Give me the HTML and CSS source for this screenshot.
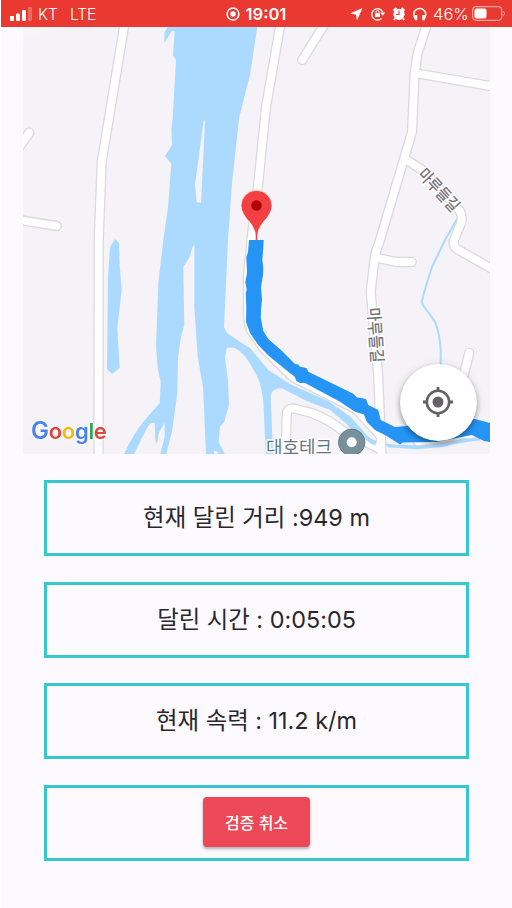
FILE: index.html
```html
<!DOCTYPE html>
<html lang="ko">
<head>
<meta charset="utf-8">
<title>달리기</title>
<link rel="stylesheet" href="styles.css">
</head>
<body>
<header class="status">
  <div class="carrier">
    <svg width="24" height="16" viewBox="0 0 24 16" fill="#fff"><rect x="1" y="10" width="4" height="5" rx="1"/><rect x="7" y="7.500" width="4" height="7.500" rx="1"/><rect x="13" y="4" width="4" height="11" rx="1"/><rect x="19" y="1" width="4" height="14" rx="1" opacity=".25"/></svg>
    <span class="kt">KT</span><span>LTE</span>
  </div>
  <div class="clock">
    <svg width="14" height="14" viewBox="0 0 14 14"><circle cx="7" cy="7" r="5.900" fill="none" stroke="#fff" stroke-width="1.500"/><circle cx="7" cy="7" r="2.700" fill="#fff"/></svg>
    <span>19:01</span>
  </div>
  <div class="indicators">
    <svg width="157" height="20" viewBox="349 4 157 20" fill="none" stroke="#fff">
      <path d="M350 13.500 362.500 8 357 20.500 355.800 14.500Z" fill="#fff" stroke="none"/>
      <path d="M382.700 12a5.700 5.700 0 1 0-1.200 6.500" stroke-width="1.300"/><path d="M380.200 12.500h5l-2.500 3.300Z" fill="#fff" stroke="none"/><path d="M376 13.500V12a1.500 1.500 0 0 1 3 0v1.500" stroke-width="1"/><rect x="375" y="13.200" width="5" height="3.800" rx=".5" fill="#fff" stroke="none"/>
      <circle cx="399" cy="14.300" r="5.600" fill="#fff" stroke="none"/><path d="m393.500 10.700 3-2.700M401.500 8l3 2.700M395 18.500l-1.200 1.500M403 18.500l1.200 1.500" stroke-width="2"/><path d="M399 10.500v4h-3" stroke="#ea3931" stroke-width="1.100"/>
      <path d="M415.300 18.500a6 6 0 1 1 8.900 0" stroke-width="1.500"/><path d="M416 15v5.300M423.500 15v5.300" stroke-width="2.500"/>
      <rect x="472.700" y="6.700" width="29" height="13.600" rx="3.500" stroke-width="1.200" opacity=".55"/><rect x="474.500" y="8.500" width="12" height="10" rx="2" fill="#fff" stroke="none"/><path d="M503.500 11.500q2 2 0 4" stroke-width="1" opacity=".6"/>
    </svg>
    <span class="battery">46%</span>
  </div>
</header>
<main>
  <section class="map">
    <svg class="terrain" width="467" height="427" viewBox="23 27 467 427">
      <defs>
        <g id="roads">
          <path d="M124.300 25 101.700 162 98.700 240 98.500 456"/>
          <path d="M29.300 132.700 18 149M56.700 226 18 219.800"/>
          <path d="M280.300 25 266 107 258.300 183 252 235 248 275V315Q248.500 325 251.500 331L263.500 348 292.500 377 356 409 380 435"/>
          <path d="M324 25 302.300 60"/>
          <path d="M426.700 25 417.700 53 414.700 73 412 132 380 240 375 255 370.700 292 378 373 381.700 456"/>
          <path d="M414.700 73 492 86.300M406.700 160 424 171 460 211Q463 218 461 223L454 240Q453 246 457 249L492 269"/>
          <path d="M375 257.500 396.700 262H411.700M469.300 352.700 460 390"/>
          <path d="M285.500 456 286.700 415Q287 407.500 294 408.500L311.700 413Q330 420 343 431L378 448"/>
          <path d="M418 441 436 439 478 433"/>
        </g>
      </defs>
      <rect x="23" y="27" width="467" height="427" fill="#f5f3f7"/>
      <path d="M23 27H60L23 38Z" fill="#f6f5f5"/>
      <g fill="#acdaff">
        <path d="M167.700 27 164.300 33V43L171.700 31 174.700 31 173 55 176 60 172.700 118 171.300 130 172 145 165 156 171.300 164 168 207 163.300 240 158.300 283 156 347 157.700 368 160.700 382 159.700 403 143.300 421.700Q132 436 124 454H134L145 431.700Q149 424 151 423H154.700L155.300 440 157 444 158.700 433 164.700 422.700V437L160.300 454H166.300L172.300 430 177.300 393 178 357 181 337 184.300 325 183.300 267 190 256.700 192 248 194.300 244.700V307L197.700 357 203 387 206 454H214V451H217L218 454H224.700L218.700 441.700 220 426.700 224.300 421.700 229 405 228 380 225 358 226.700 347.700H234Q247 353 260 383L263.300 400 265.700 454H273L270.700 397Q271 388 281.700 388.300L306.700 401 330 410 346.700 424 360 440 390 446.700 416.700 448.300 443.300 446 480 440V438.500L463 438 430 445 396.700 444.700 370 441.700 350 418.300 330 402 290 384 268.300 370 250 348 240 341.700 226.700 332.700 224 327 228 240 232 183 239.300 117 250 75 257.300 27Z"/>
        <path d="M115 239 119 243 119.700 265 121.700 290 117.300 328 119.700 368 112 373.700 107 369 108 277 110 247Z"/>
      </g>
      <path d="m203.700 120 1.300 1-4 82-4.300-1-1.700-17 3-22Z" fill="#f5f3f7"/>
      <path d="M457 219 445 240 432 267Q425 288 421.700 301.700L423 305 435 321.700Q440 335 440.700 350V374" fill="none" stroke="#acdaff" stroke-width="2"/>
      <g fill="none" stroke-linecap="round" stroke-linejoin="round"><use href="#roads" stroke="#dad9df" stroke-width="10.400"/><use href="#roads" stroke="#fff" stroke-width="7.800"/></g>
      <path d="M336 409 349 418.500 362 433Q368 441 376 443" fill="none" stroke="#acdaff" stroke-width="4.500"/>
      <path d="M388 446.300 416.700 448.300 443.300 446 463 439.500 480 439.500" fill="none" stroke="#acdaff" stroke-width="2"/>
      <path d="M249 240H263.700L263 252 262.300 260 263.300 268 263 275 261 287 262 300 261 310 260.800 318 263.300 331 268.300 339 282 351 295 364 298.300 364.500 299.500 366.500 306.700 368.300 308.300 371.700 353.300 393.700 356.700 397.300 366 399 368.300 405 378.300 410 380.700 420 395 427 440 423 475 419 490 423V442L484 441 471.700 435 436.700 442 403 442.500 400 444.500 386.700 436 375 430 366.700 421.700 364 414.500 355 411.700 340 401.700 305 383 300 383 296 380.500 295 377 288.300 371.700 268.300 355.500 258.300 345 250 333 246 322 246.300 307 245.700 293 246.700 290 245.300 282 247 273 246.300 257 248 252Z" fill="#2694f4"/>
      <g class="road-name">
        <text transform="translate(417 175) rotate(47)" textLength="52" lengthAdjust="spacingAndGlyphs">마루들길</text>
        <text transform="translate(367.500 308) rotate(86)" textLength="55" lengthAdjust="spacingAndGlyphs">마루들길</text>
      </g>
      <text class="place" x="266" y="454" textLength="66" lengthAdjust="spacingAndGlyphs">대호테크</text>
      <circle cx="351.700" cy="442.300" r="13.200" fill="#78909c" stroke="#657c88"/><circle cx="351.700" cy="442.300" r="5" fill="#fff"/>
      <path d="M256.500 240Q255.600 229 249.500 222 241 213 241 205.800a15.500 15.500 0 0 1 31 0Q272 213 263.500 222 257.400 229 256.500 240Z" fill="#f44043" stroke="#fff" stroke-opacity=".65" stroke-width="1"/>
      <path d="M256.500 232V240" stroke="#f44043" stroke-width="1.400"/>
      <circle cx="256.500" cy="205.500" r="5.200" fill="#b00000"/>
      <text class="google" x="31" y="438.500"><tspan class="initial" fill="#4783eb">G</tspan><tspan fill="#df453a">o</tspan><tspan fill="#f6b90b">o</tspan><tspan fill="#4783eb">g</tspan><tspan fill="#35a455">l</tspan><tspan fill="#df453a">e</tspan></text>
    </svg>
    <button class="locate" aria-label="내 위치"><svg width="32" height="32" viewBox="-16 -16 32 32" fill="none" stroke="#646264"><circle r="11.200" stroke-width="2.600"/><circle r="5.500" fill="#646264" stroke="none"/><path d="M0-15v4M0 15v-4M-15 0h4M15 0h-4" stroke-width="2.800"/></svg></button>
  </section>
  <section class="stats">
    <div class="card"><span class="distance">현재 달린 거리 :949 m</span></div>
    <div class="card"><span class="time">달린 시간 : 0:05:05</span></div>
    <div class="card"><span class="speed">현재 속력 : 11.2 k/m</span></div>
    <div class="card action"><button class="cancel">검증 취소</button></div>
  </section>
</main>
</body>
</html>
```
FILE: styles.css
```css
* { box-sizing: border-box; }
body {
  margin: 0;
  height: 908px;
  overflow: hidden;
  background: #fcfaff;
  border-left: 1px solid #fff;
  color: #29272b;
  font-family: Inter, "Noto Sans CJK KR", sans-serif;
}
button { border: 0; padding: 0; font-family: inherit; }
.status {
  height: 27px;
  display: grid;
  grid-template-columns: 224px 1fr 157px;
  align-items: center;
  padding: 1px 6px 0 8px;
  background: #ea3931;
  color: #fff;
  font-size: 15px;
}
.carrier, .clock { display: flex; align-items: center; }
.carrier { gap: 12px; font-weight: 300; font-size: 15.500px; }
.carrier svg { margin-right: -7px; }
.clock { gap: 6px; margin-left: -7.500px; font-weight: 600; font-size: 16.600px; }
.indicators { position: relative; height: 20px; margin-top: -1px; }
.indicators svg { display: block; }
.battery {
  position: absolute;
  left: 84px;
  top: 0;
  font-size: 16.500px;
  line-height: 20px;
  font-weight: 300;
}
.map { position: relative; width: 467px; height: 427px; margin-left: 22px; }
.terrain { display: block; }
.road-name, .place { paint-order: stroke; stroke: #fff; stroke-linejoin: round; }
.road-name { font: 500 16.500px "Noto Sans CJK KR", sans-serif; fill: #77757b; stroke-width: 3px; }
.place { font: 18px "Noto Sans CJK KR", sans-serif; fill: #5f7785; stroke-width: 3px; }
.google {
  font: 600 22px Inter, sans-serif;
  letter-spacing: -.3px;
  filter: drop-shadow(0 0 1px #fff) drop-shadow(0 0 1px #fff);
}
.initial { font-size: 24px; }
.locate {
  position: absolute;
  right: 13.500px;
  bottom: 13.500px;
  width: 77px;
  height: 77px;
  display: grid;
  place-items: center;
  border-radius: 50%;
  background: #fff;
  box-shadow: 0 3px 5px rgba(0, 0, 0, .3), 0 1px 8px rgba(0, 0, 0, .14);
}
.stats { display: grid; gap: 25.700px; padding: 26px 43px 0; }
.card {
  height: 76px;
  display: flex;
  align-items: center;
  justify-content: center;
  padding-bottom: 4px;
  border: 3px solid #36c7cf;
  font-size: 23.400px;
  white-space: pre;
}
.action { padding-bottom: 2px; }
.cancel {
  width: 107px;
  height: 50px;
  padding-bottom: 1px;
  border-radius: 4px;
  background: #ec4858;
  color: #fff;
  font-size: 16px;
  font-weight: 500;
  box-shadow: 0 2px 3px rgba(0, 0, 0, .3);
}
```
